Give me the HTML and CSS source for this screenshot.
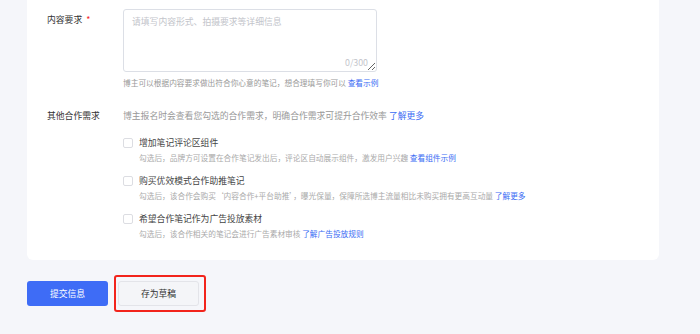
FILE: index.html
```html
<!DOCTYPE html>
<html lang="zh-CN">
<head>
    <meta charset="UTF-8">
    <meta name="viewport" content="width=device-width, initial-scale=1.0">
    <title>合作需求</title>
    <link rel="stylesheet" href="styles.css">
</head>
<body>
    <div class="page">
        <div class="card">
            <div class="form-item">
                <div class="label">内容要求 <span class="required">*</span></div>
                <div class="content">
                    <div class="textarea-box">
                        <textarea placeholder="请填写内容形式、拍摄要求等详细信息"></textarea>
                        <span class="counter">0/300</span>
                    </div>
                    <div class="help">博主可以根据内容要求做出符合你心意的笔记，想合理填写你可以 <a href="#">查看示例</a></div>
                </div>
            </div>

            <div class="form-item second">
                <div class="label">其他合作需求</div>
                <div class="content">
                    <div class="desc">博主报名时会查看您勾选的合作需求，明确合作需求可提升合作效率 <a href="#">了解更多</a></div>

                    <div class="option">
                        <label class="check"><span class="box"></span>增加笔记评论区组件</label>
                        <div class="sub">勾选后，品牌方可设置在合作笔记发出后，评论区自动展示组件，激发用户兴趣 <a href="#">查看组件示例</a></div>
                    </div>
                    <div class="option">
                        <label class="check"><span class="box"></span>购买优效模式合作助推笔记</label>
                        <div class="sub">勾选后，该合作会购买‘内容合作+平台助推’，曝光保量，保障所选博主流量相比未购买拥有更高互动量 <a href="#">了解更多</a></div>
                    </div>
                    <div class="option">
                        <label class="check"><span class="box"></span>希望合作笔记作为广告投放素材</label>
                        <div class="sub">勾选后，该合作相关的笔记会进行广告素材审核 <a href="#">了解广告投放规则</a></div>
                    </div>
                </div>
            </div>
        </div>

        <div class="actions">
            <button class="btn primary">提交信息</button>
            <span class="highlight">
                <button class="btn draft">存为草稿</button>
            </span>
        </div>
    </div>
</body>
</html>
```

FILE: styles.css
```css
body {
    margin: 0;
    background-color: #f5f6fa;
    font-family: "Noto Sans CJK SC", "Liberation Sans", sans-serif;
    color: #333;
}
.page {
    padding: 0 41px 0 27px;
}
.card {
    background-color: #fff;
    border-radius: 0 0 6px 6px;
    padding: 9px 20px 20px 20px;
}
.form-item {
    display: flex;
}
.form-item.second {
    margin-top: 20px;
}
.label {
    width: 76px;
    flex-shrink: 0;
    font-size: 8.8px;
    line-height: 14px;
    color: #333;
}
.form-item:first-child .label {
    padding-top: 4px;
}
.required {
    color: #f5222d;
    margin-left: 2px;
}
.content {
    flex: 1;
}
.textarea-box {
    position: relative;
    width: 254px;
    height: 63px;
}
textarea {
    box-sizing: border-box;
    width: 100%;
    height: 100%;
    border: 1px solid #dcdfe6;
    border-radius: 3px;
    padding: 5px 8px;
    font-family: inherit;
    font-size: 8.8px;
    line-height: 14px;
    color: #333;
    outline: none;
    resize: vertical;
}
textarea::placeholder {
    color: #c3c5cb;
}
.counter {
    position: absolute;
    right: 9px;
    bottom: 3px;
    font-size: 8.8px;
    line-height: 12px;
    color: #c3c5cb;
}
.help {
    margin-top: 5px;
    font-size: 7.7px;
    line-height: 12px;
    color: #999;
}
a {
    color: #3a6cf4;
    text-decoration: none;
}
.desc {
    font-size: 8.8px;
    line-height: 14px;
    color: #999;
}
.option {
    margin-top: 10px;
}
.desc + .option {
    margin-top: 13px;
}
.check {
    display: flex;
    align-items: center;
    font-size: 8.8px;
    line-height: 14px;
    color: #444;
}
.box {
    box-sizing: border-box;
    width: 10px;
    height: 10px;
    border: 1px solid #dcdde2;
    border-radius: 2px;
    margin-right: 6px;
    background-color: #fff;
}
.sub {
    margin-top: 2px;
    padding-left: 16px;
    font-size: 7.7px;
    line-height: 12px;
    color: #aaa;
    white-space: nowrap;
}
.actions {
    display: flex;
    align-items: center;
    margin-top: 15px;
}
.btn {
    width: 81px;
    height: 25px;
    border-radius: 3px;
    font-family: inherit;
    font-size: 8.8px;
    cursor: pointer;
    padding: 0;
}
.primary {
    background-color: #3e6cf6;
    border: none;
    color: #fff;
}
.highlight {
    display: inline-flex;
    margin-left: 6px;
    border: 2px solid #f2241c;
    border-radius: 3px;
    padding: 4px 5px 4px 2px;
}
.draft {
    background-color: #f4f5f8;
    border: 1px solid #e3e4e9;
    color: #333;
}
```
